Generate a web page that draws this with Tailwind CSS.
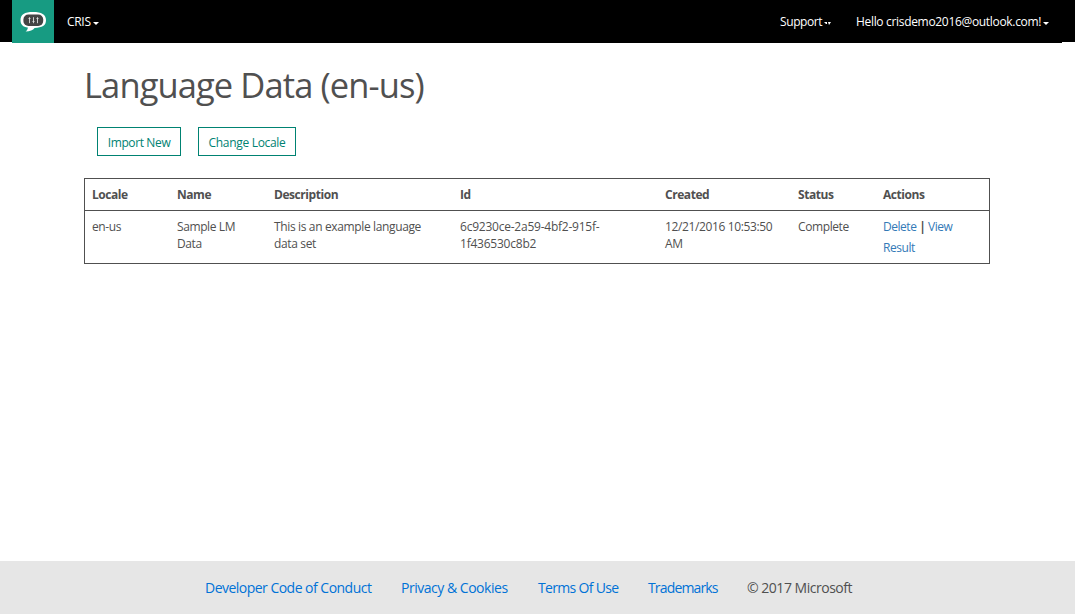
<!DOCTYPE html>
<html lang="en">
<head>
<meta charset="utf-8">
<title>Language Data (en-us)</title>
<script src="https://cdn.jsdelivr.net/npm/@tailwindcss/browser@4"></script>
</head>
<body class="flex h-[614px] flex-col bg-white font-['Open_Sans',sans-serif] text-[12px] leading-[17px] text-[#505050]">
<header class="h-[42px] bg-black px-3 text-white">
  <nav class="mr-px flex h-[43px] items-center bg-black">
    <a class="block h-[43px] w-[42px] bg-[#179b82]">
      <svg class="block" width="42" height="43" viewBox="0 0 42 43">
        <path d="M21 12C12.5 12 8.5 14.5 8.5 20.2C8.5 24.5 11 27 15.8 27.6C15.8 29.5 15 30.7 13.6 31.4C18 31.2 21 30 22.6 27.9C30.3 27.6 34 25.5 34 20.2C34 14.5 29.5 12 21 12Z" fill="#fff"/>
        <rect x="11.4" y="14.6" width="19.8" height="11.4" rx="5" fill="#444"/>
        <path d="M17.5 17.2v6M21.5 17.2v6M25.5 17.2v6M16.5 18.5h2M20.5 21.5h2M24.5 18.5h2" stroke="#ddd" stroke-width=".9"/>
      </svg>
    </a>
    <a class="ml-[13px] flex items-center"><span class="w-[25px] whitespace-nowrap tracking-[-0.3px]">CRIS</span><svg class="mt-1 ml-px" width="6" height="3"><path d="M0 0h6L3 3z" fill="#fff"/></svg></a>
    <a class="ml-auto flex items-center"><span class="w-[43px] whitespace-nowrap tracking-[-0.4px]">Support</span><svg class="mt-[3px] ml-px" width="7" height="3"><path d="M0 0h3v2H2zM4 0h3L5 3z" fill="#fff"/></svg></a>
    <a class="mr-[13px] ml-[25px] flex items-center"><span class="w-[186px] whitespace-nowrap tracking-[-0.32px]">Hello crisdemo2016@outlook.com!</span><svg class="mt-1 ml-px" width="6" height="3"><path d="M0 0h6L3 3z" fill="#fff"/></svg></a>
  </nav>
</header>
<main class="ml-[84px] w-[906px] flex-1 pt-[19px]">
  <h1 class="h-[48px] text-[34.5px] leading-[48px] font-normal tracking-[-0.9px] whitespace-nowrap">Language Data (en-us)</h1>
  <div class="mt-[18px] ml-[13px] flex gap-[17px] text-[#008272]">
    <button class="h-[29px] w-[84px] border border-[#008272] pt-px tracking-[-0.38px] whitespace-nowrap">Import New</button>
    <button class="h-[29px] w-[98px] border border-[#008272] pt-px tracking-[-0.3px] whitespace-nowrap">Change Locale</button>
  </div>
  <section class="mt-[22px] h-[86px] border border-[#505050]">
    <div class="grid h-[32px] grid-cols-[85px_97px_186px_205px_133px_85px_1fr] border-b border-[#505050] pt-[7px] pl-[7px] font-bold tracking-[-0.44px]">
      <div>Locale</div><div>Name</div><div>Description</div><div>Id</div><div>Created</div><div>Status</div><div>Actions</div>
    </div>
    <div class="grid grid-cols-[85px_97px_186px_205px_133px_85px_1fr] pt-[7px] pl-[7px] tracking-[-0.4px] whitespace-nowrap">
      <div>en-us</div>
      <div>Sample LM<br>Data</div>
      <div class="tracking-[-0.36px]">This is an example language<br>data set</div>
      <div class="tracking-[-0.23px]">6c9230ce-2a59-4bf2-915f-<br>1f436530c8b2</div>
      <div class="tracking-[-0.37px]">12/21/2016 10:53:50<br>AM</div>
      <div>Complete</div>
      <div class="-mt-[2px] leading-[21px] tracking-[-0.46px] text-[#337ab7]"><a>Delete</a> <b class="text-[#505050]">|</b> <a>View<br>Result</a></div>
    </div>
  </section>
</main>
<footer class="flex h-[53px] items-center bg-[#e6e6e6] pl-[205px] text-[14px] tracking-[-0.48px] whitespace-nowrap text-[#0072d6]">
  <a class="w-[196px] tracking-[-0.52px]">Developer Code of Conduct</a>
  <a class="w-[137px]">Privacy &amp; Cookies</a>
  <a class="w-[110px] tracking-[-0.68px]">Terms Of Use</a>
  <a class="w-[99px] tracking-[-0.85px]">Trademarks</a>
  <span class="text-[#505050]">© 2017 Microsoft</span>
</footer>
</body>
</html>
